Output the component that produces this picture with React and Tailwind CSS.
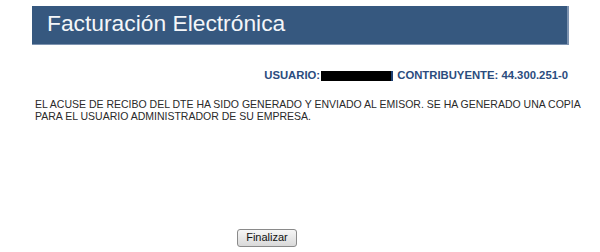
import React from 'react';

const App = () => {
  return (
    <div className="w-[600px] h-[252px] bg-white" style={{ fontFamily: '"Liberation Sans", Arial, sans-serif' }}>
      <div className="ml-[32px] w-[537px] pt-[6px]">
        {/* Header */}
        <div className="h-[39px] bg-[#36587f] border-r-2 border-b border-[#7d93b0] flex items-center pl-[15px]">
          <h1 className="text-[22.8px] leading-none text-[#f4f6f9] pb-[3px]">Facturación Electrónica</h1>
        </div>

        {/* User info */}
        <div className="mt-[25px] flex justify-end items-center text-[11.3px] font-bold text-[#2b4c7e] leading-none pr-[1px]">
          <span>USUARIO:</span>
          <span className="inline-block w-[72px] h-[10px] bg-black border-r-2 border-[#1d3f73] mx-[1px]"></span>
          <span>&nbsp;CONTRIBUYENTE: 44.300.251-0</span>
        </div>
      </div>

      {/* Message */}
      <p className="ml-[35px] mt-[17px] w-[560px] text-[10.5px] leading-[12px] text-[#2a2a2a]">
        EL ACUSE DE RECIBO DEL DTE HA SIDO GENERADO Y ENVIADO AL EMISOR. SE HA GENERADO UNA COPIA PARA EL USUARIO ADMINISTRADOR DE SU EMPRESA.
      </p>

      {/* Footer button */}
      <div className="mt-[102px] pl-[237px]">
        <button className="h-[18px] w-[60px] border border-[#8a8a8a] rounded-[3px] bg-gradient-to-b from-[#f6f6f6] to-[#d9d9d9] text-[11px] leading-none text-[#111]">
          Finalizar
        </button>
      </div>
    </div>
  );
};

export default App;
